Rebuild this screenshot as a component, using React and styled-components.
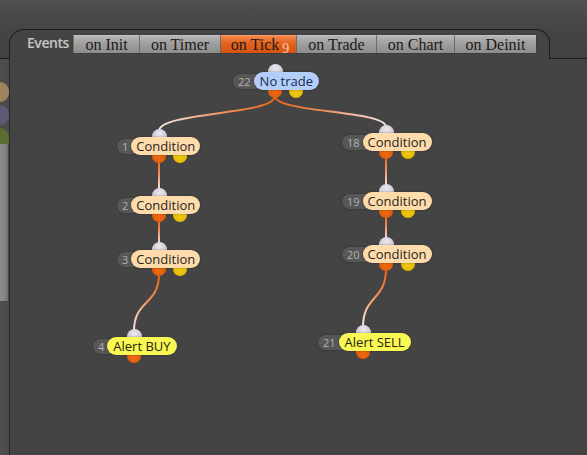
import React from 'react';
import styled, { createGlobalStyle } from 'styled-components';

const Global = createGlobalStyle`
  html, body { margin: 0; padding: 0; background: #444444; overflow: hidden; }
  #root { width: 587px; height: 455px; }
`;

const LINE = '#1c1c1c';
const OX = 10;
const OY = 59;

const Page = styled.div`
  width: 587px;
  height: 455px;
  display: flex;
  flex-direction: column;
  background: #444444;
  font-family: "Open Sans", "Noto Sans", sans-serif;
`;

const Header = styled.div`
  height: 59px;
  flex: none;
  display: flex;
  align-items: flex-end;
  background: linear-gradient(#4f4f4f, #444444 55%, #424242);
`;

const Cap = styled.div`
  width: ${p => (p.$grow ? 'auto' : '9px')};
  flex: ${p => (p.$grow ? '1' : 'none')};
  align-self: stretch;
  border-bottom: 1px solid ${LINE};
`;

const TabFrame = styled.div`
  width: 541px;
  height: 30px;
  box-sizing: border-box;
  flex: none;
  border: 1px solid ${LINE};
  border-bottom: none;
  border-radius: 15px 14px 0 0;
  display: flex;
  align-items: flex-start;
  padding: 5px 0 0 17px;
  background: #444444;
`;

const EventsLabel = styled.div`
  width: 46px;
  height: 18px;
  line-height: 16px;
  font-size: 14px;
  font-weight: 600;
  color: #c6c6c6;
  letter-spacing: -0.45px;
`;

const Tabs = styled.div`
  display: flex;
  box-shadow: 0 0 1px rgba(0,0,0,0.5);
`;

const Tab = styled.div`
  width: ${p => p.$w}px;
  height: 18px;
  box-sizing: border-box;
  display: flex;
  align-items: center;
  justify-content: center;
  font-family: "Liberation Serif", serif;
  font-size: 16px;
  color: #1e1a18;
  background: ${p =>
    p.$active
      ? 'linear-gradient(#f5864a, #e2621f 45%, #d6520f)'
      : 'linear-gradient(#b5b5b5, #9d9d9d 50%, #8d8d8d)'};
  border-left: 1px solid ${p => (p.$first ? '#777' : '#6c6c6c')};
  border-top: 1px solid ${p => (p.$active ? '#f79a66' : '#c2c2c2')};
  padding-top: 1px;
`;

const Sub = styled.span`
  font-size: 14px;
  color: #f8cdb0;
  position: relative;
  top: 4px;
  margin-left: 3px;
  margin-right: -3px;
`;

const Main = styled.div`
  flex: 1;
  display: flex;
  min-height: 0;
`;

const Sidebar = styled.div`
  width: 9px;
  flex: none;
  border-right: 1px solid #2a2a2a;
  display: flex;
  flex-direction: column;
  background: linear-gradient(90deg, #4e4e4e, #4a4a4a);
  padding-top: 23px;
`;

const Swatch = styled.div`
  width: 9px;
  height: ${p => p.$h}px;
  margin-top: ${p => p.$mt}px;
  background: ${p => p.$c};
  border-radius: ${p => (p.$flat ? '0 10px 0 0 / 0 10px 0 0' : '0 10px 10px 0 / 0 10px 10px 0')};
`;

const Thumb = styled.div`
  width: 8px;
  height: 157px;
  background: linear-gradient(90deg, #8c8c8c, #858585 60%, #6e6e6e);
`;

const Canvas = styled.div`
  flex: 1;
  position: relative;
  background: #444444;
  overflow: hidden;
`;

const Wires = styled.svg`
  position: absolute;
  left: 0;
  top: 0;
  width: 100%;
  height: 100%;
  pointer-events: none;
`;

const Node = styled.div`
  position: absolute;
  display: flex;
  align-items: center;
  height: 18px;
`;

const NumPill = styled.div`
  height: 15px;
  line-height: 15px;
  border-radius: 8px;
  background: #575757;
  color: #b2b2b2;
  font-size: 11px;
  padding: 0 13px 0 5px;
  margin-right: -10px;
  position: relative;
  z-index: 1;
  box-shadow: 0 0 2px rgba(0,0,0,0.35);
`;

const LABEL_BG = { peach: '#fddbab', blue: '#b3cff9', alert: '#f9f752' };
const LABEL_FG = { peach: '#2a241c', blue: '#1a2a4c', alert: '#26240c' };

const Label = styled.div`
  height: 18px;
  line-height: 18px;
  border-radius: 9px;
  padding: 0 ${p => (p.$kind === 'peach' ? 5 : 6)}px;
  background: ${p => LABEL_BG[p.$kind]};
  color: ${p => LABEL_FG[p.$kind]};
  font-size: 13px;
  position: relative;
  z-index: 3;
  white-space: nowrap;
  box-shadow: 0 0 2px rgba(0,0,0,0.35);
`;

const Port = styled.div`
  position: absolute;
  width: ${p => p.$d}px;
  height: ${p => p.$d}px;
  border-radius: 50%;
  left: ${p => p.$l}px;
  top: ${p => p.$t}px;
  z-index: 2;
  background: ${p =>
    p.$type === 'in'
      ? 'radial-gradient(circle at 50% 30%, #ece8f0, #cdc6d4 60%, #aaa2b2)'
      : p.$type === 'out'
      ? 'radial-gradient(circle at 50% 60%, #ee6a14, #e05a08 70%, #c84c04)'
      : 'radial-gradient(circle at 50% 60%, #f0c810, #e2b800 70%, #c8a000)'};
`;

const nodes = [
  { id: 22, label: 'No trade', kind: 'blue', x: 233, y: 72, cx: 275, yc: 296 },
  { id: 1, label: 'Condition', kind: 'peach', x: 117, y: 137, cx: 159, yc: 180 },
  { id: 2, label: 'Condition', kind: 'peach', x: 117, y: 196, cx: 159, yc: 180 },
  { id: 3, label: 'Condition', kind: 'peach', x: 117, y: 250, cx: 159, yc: 180 },
  { id: 4, label: 'Alert BUY', kind: 'alert', x: 93, y: 337, cx: 134 },
  { id: 18, label: 'Condition', kind: 'peach', x: 342, y: 133, cx: 386, yc: 408 },
  { id: 19, label: 'Condition', kind: 'peach', x: 342, y: 192, cx: 386, yc: 408 },
  { id: 20, label: 'Condition', kind: 'peach', x: 342, y: 245, cx: 386, yc: 408 },
  { id: 21, label: 'Alert SELL', kind: 'alert', x: 318, y: 333, cx: 363 },
];

const byId = Object.fromEntries(nodes.map(n => [n.id, n]));

const edges = [
  [22, 1], [22, 18], [1, 2], [2, 3], [3, 4], [18, 19], [19, 20], [20, 21],
];

function wirePath(a, b) {
  const x1 = a.cx - OX;
  const y1 = a.y + 24 - OY;
  const x2 = b.cx - OX;
  const y2 = b.y - 6 - OY;
  if (x1 === x2) return { d: `M${x1},${y1} L${x2},${y2}`, x1, y1, x2, y2 };
  const dy = (y2 - y1) * 0.55;
  return {
    d: `M${x1},${y1} C${x1},${y1 + dy} ${x2},${y2 - dy} ${x2},${y2}`,
    x1, y1, x2, y2,
  };
}

const tabs = [
  { t: 'on Init', w: 66 },
  { t: 'on Timer', w: 81 },
  { t: 'on Tick', w: 76, active: true },
  { t: 'on Trade', w: 80 },
  { t: 'on Chart', w: 78 },
  { t: 'on Deinit', w: 82 },
];

export default function App() {
  return (
    <Page>
      <Global />
      <Header>
        <Cap />
        <TabFrame>
          <EventsLabel>Events</EventsLabel>
          <Tabs>
            {tabs.map((tb, i) => (
              <Tab key={tb.t} $w={tb.w} $active={tb.active} $first={i === 0}>
                {tb.t}
                {tb.active && <Sub>9</Sub>}
              </Tab>
            ))}
          </Tabs>
        </TabFrame>
        <Cap $grow />
      </Header>
      <Main>
        <Sidebar>
          <Swatch $c="#a2825e" $h={20} $mt={0} />
          <Swatch $c="#5c5b78" $h={20} $mt={3} />
          <Swatch $c="#5b6b32" $h={16} $mt={3} $flat />
          <Thumb />
        </Sidebar>
        <Canvas>
          <Wires>
            <defs>
              {edges.map(([a, b]) => {
                const w = wirePath(byId[a], byId[b]);
                return (
                  <linearGradient
                    key={`g${a}-${b}`}
                    id={`g${a}-${b}`}
                    gradientUnits="userSpaceOnUse"
                    x1={w.x1}
                    y1={w.y1}
                    x2={w.x2}
                    y2={w.y2}
                  >
                    <stop offset="0" stopColor="#ea6418" />
                    <stop offset="0.45" stopColor="#f0925a" />
                    <stop offset="1" stopColor="#f6e8ec" />
                  </linearGradient>
                );
              })}
            </defs>
            {edges.map(([a, b]) => {
              const w = wirePath(byId[a], byId[b]);
              return (
                <path
                  key={`p${a}-${b}`}
                  d={w.d}
                  fill="none"
                  stroke={`url(#g${a}-${b})`}
                  strokeWidth="2"
                />
              );
            })}
          </Wires>
          {nodes.map(n => (
            <Node key={n.id} style={{ left: n.x - OX, top: n.y - OY }}>
              <Port $type="in" $d={15} $l={n.cx - n.x - 7.5} $t={-8} />
              <NumPill>{n.id}</NumPill>
              <Label $kind={n.kind}>{n.label}</Label>
              <Port $type="out" $d={14} $l={n.cx - n.x - 7} $t={12} />
              {n.yc && <Port $type="yel" $d={14} $l={n.yc - n.x - 7} $t={12} />}
            </Node>
          ))}
        </Canvas>
      </Main>
    </Page>
  );
}
